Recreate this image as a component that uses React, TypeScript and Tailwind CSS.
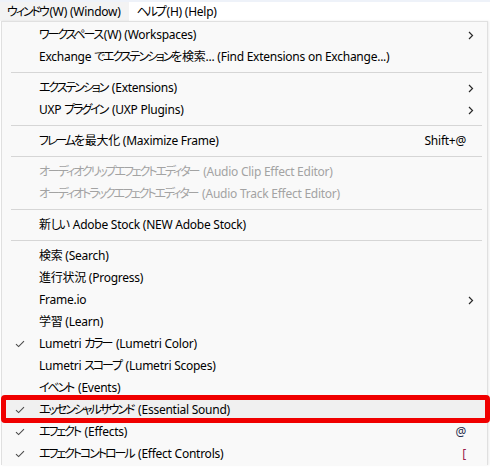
import React from "react";

type Row =
  | { kind: "sep" }
  | {
      kind: "item";
      label: string;
      checked?: boolean;
      sub?: boolean;
      shortcut?: string;
      shortcutClass?: string;
      disabled?: boolean;
      hot?: boolean;
    };

const rows: Row[] = [
  { kind: "item", label: "ワークスペース(W) (Workspaces)", sub: true },
  { kind: "item", label: "Exchange でエクステンションを検索... (Find Extensions on Exchange...)" },
  { kind: "sep" },
  { kind: "item", label: "エクステンション (Extensions)", sub: true },
  { kind: "item", label: "UXP プラグイン (UXP Plugins)", sub: true },
  { kind: "sep" },
  { kind: "item", label: "フレームを最大化 (Maximize Frame)", shortcut: "Shift+@" },
  { kind: "sep" },
  { kind: "item", label: "オーディオクリップエフェクトエディター (Audio Clip Effect Editor)", disabled: true },
  { kind: "item", label: "オーディオトラックエフェクトエディター (Audio Track Effect Editor)", disabled: true },
  { kind: "sep" },
  { kind: "item", label: "新しい Adobe Stock (NEW Adobe Stock)" },
  { kind: "sep" },
  { kind: "item", label: "検索 (Search)" },
  { kind: "item", label: "進行状況 (Progress)" },
  { kind: "item", label: "Frame.io", sub: true },
  { kind: "item", label: "学習 (Learn)" },
  { kind: "item", label: "Lumetri カラー (Lumetri Color)", checked: true },
  { kind: "item", label: "Lumetri スコープ (Lumetri Scopes)" },
  { kind: "item", label: "イベント (Events)" },
  { kind: "item", label: "エッセンシャルサウンド (Essential Sound)", checked: true, hot: true },
  { kind: "item", label: "エフェクト (Effects)", checked: true, shortcut: "@", shortcutClass: "text-[#1d2a4a]" },
  { kind: "item", label: "エフェクトコントロール (Effect Controls)", checked: true, shortcut: "[", shortcutClass: "text-[#9b1c4c] pr-[3px]" },
];

const KANA = /^[\u3040-\u30ff]+$/;

function Label({ text }: { text: string }) {
  const parts = text.split(/([\u3040-\u30ff]+)/);
  return (
    <>
      {parts.map((p, i) =>
        KANA.test(p) ? (
          <React.Fragment key={i}>
            <span className="tracking-[-2.1px]">{p.slice(0, -1)}</span>
            {p.slice(-1)}
          </React.Fragment>
        ) : (
          <React.Fragment key={i}>{p}</React.Fragment>
        )
      )}
    </>
  );
}

function Check() {
  return (
    <svg width="10" height="8" viewBox="0 0 10 8" className="block">
      <path d="M1 4.2 L3.6 6.6 L9 1.2" fill="none" stroke="#4a4a4a" strokeWidth="1.1" />
    </svg>
  );
}

function Chevron() {
  return (
    <svg width="6" height="9" viewBox="0 0 6 9" className="block">
      <path d="M1 1 L4.5 4.5 L1 8" fill="none" stroke="#2a2a2a" strokeWidth="1.2" />
    </svg>
  );
}

export default function App() {
  return (
    <div
      className="w-[490px] h-[467px] overflow-hidden bg-white text-[12px] tracking-[-0.25px] text-black [font-feature-settings:'palt']"
      style={{ fontFamily: '"Noto Sans", "Noto Sans CJK JP", sans-serif' }}
    >
      {/* menu bar */}
      <div className="h-[2px] bg-[#eef2f9]" />
      <div className="flex h-[19px] items-center bg-white">
        <div className="flex h-full items-center bg-[#f3f3f3] pl-[7px] pr-[8px]">
          <Label text="ウィンドウ(W) (Window)" />
        </div>
        <div className="flex h-full items-center pl-[8px]">
          <Label text="ヘルプ(H) (Help)" />
        </div>
      </div>

      {/* dropdown */}
      <div className="relative ml-[1px] mr-[2px] border-t border-l border-r border-[#e0e0e0] bg-[#f9f9f9] pt-[2px] shadow-[1px_0_2px_rgba(0,0,0,0.08)]">
        {rows.map((r, i) =>
          r.kind === "sep" ? (
            <div key={i} className="flex h-[9px] items-center pl-[9px] pr-[5px]">
              <div className="h-px w-full bg-[#d6d6d6]" />
            </div>
          ) : (
            <div
              key={i}
              className={`flex h-[22px] items-center ${r.hot ? "bg-[#f0f0f0]" : ""} ${
                r.disabled ? "text-[#a3a3a3]" : ""
              }`}
            >
              <div className="flex w-[37px] shrink-0 items-center pl-[13px]">{r.checked ? <Check /> : null}</div>
              <div className="flex-1 whitespace-nowrap">
                <Label text={r.label} />
              </div>
              {r.shortcut ? (
                <div className={`pr-[21px] whitespace-nowrap ${r.shortcutClass ?? ""}`}>{r.shortcut}</div>
              ) : null}
              {r.sub ? (
                <div className="pr-[13px]">
                  <Chevron />
                </div>
              ) : null}
            </div>
          )
        )}

        {/* red annotation frame around the highlighted row */}
        <div className="pointer-events-none absolute left-[-1px] top-[373px] h-[28px] w-[489px] rounded-[4px] border-[5px] border-[#f00000]" />
      </div>
    </div>
  );
}
